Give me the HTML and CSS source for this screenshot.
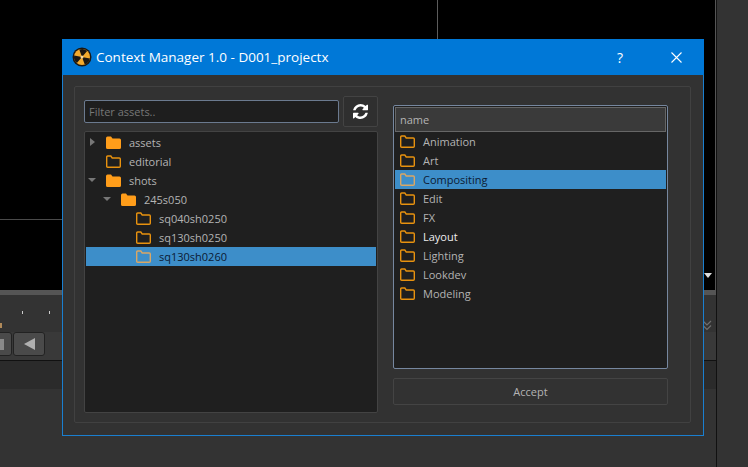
FILE: index.html
```html
<!DOCTYPE html>
<html lang="en">
<head>
  <meta charset="UTF-8">
  <meta name="viewport" content="width=device-width, initial-scale=1">
  <title>Context Manager</title>
  <link rel="stylesheet" href="styles.css">
</head>

<body>
  <svg class="defs" width="0" height="0">
    <symbol id="folder-fill" viewBox="0 0 15 13">
      <path d="M0 2.200Q0 .5 1.500 .5H5L6.500 2.500H13.500Q15 2.500 15 4V11.500Q15 13 13.500 13H1.500Q0 13 0 11.500Z" fill="#ff9d1a"/>
    </symbol>
    <symbol id="folder-line" viewBox="0 0 15 13">
      <path d="M.7 2.200Q.7 1 1.700 1H4.800L6.200 3H13.300Q14.300 3 14.300 4V11.300Q14.300 12.300 13.300 12.300H1.700Q.7 12.300 .7 11.300Z" fill="none" stroke="#e8920f" stroke-width="1.400"/>
    </symbol>
    <symbol id="folder-pale" viewBox="0 0 15 13">
      <path d="M.7 2.200Q.7 1 1.700 1H4.800L6.200 3H13.300Q14.300 3 14.300 4V11.300Q14.300 12.300 13.300 12.300H1.700Q.7 12.300 .7 11.300Z" fill="none" stroke="#d9a765" stroke-width="1.400"/>
    </symbol>
  </svg>

  <!-- app behind the dialog -->
  <div class="app">
    <div class="main">
      <div class="viewer">
        <div class="viewer-hline"></div>
        <div class="viewer-vline"></div>
        <div class="viewer-marker"></div>
      </div>
      <div class="timeline">
        <div class="timeline-strip"></div>
        <div class="ticks"><span class="tick"></span><span class="tick"></span></div>
        <div class="frame-mark"></div>
        <div class="transport">
          <div class="tbtn tbtn-stop"><span class="bar"></span></div>
          <div class="tbtn tbtn-back"><span class="arrow"></span></div>
        </div>
        <div class="chevrons">
          <svg width="10" height="11" viewBox="0 0 10 11"><path d="M1 1L5 5L9 1M1 5.500L5 9.500L9 5.500" fill="none" stroke="#6f6f6f" stroke-width="1.200"/></svg>
        </div>
      </div>
      <div class="status"></div>
    </div>
    <div class="side"></div>
  </div>

  <div class="dialog">
    <div class="titlebar">
      <svg class="nuke" width="20" height="20" viewBox="0 0 20 20">
        <circle cx="10" cy="10" r="9.500" fill="#1b1712"/>
        <circle cx="10" cy="10" r="8" fill="#f2aa2e"/>
        <g transform="rotate(10 10 10)">
          <path d="M10 10L6 3.100A8 8 0 0 1 14 3.100ZM10 10L18 10A8 8 0 0 1 14 16.900ZM10 10L6 16.900A8 8 0 0 1 2 10Z" fill="#1b1712"/>
        </g>
        <circle cx="10" cy="10" r="1.500" fill="#f7d9a0"/>
      </svg>
      <span class="title">Context Manager 1.0 - D001_projectx</span>
      <span class="help">?</span>
      <svg class="close" width="11" height="11" viewBox="0 0 11 11"><path d="M.5 .5L10.500 10.500M10.500 .5L.5 10.500" stroke="#fff" stroke-width="1.100"/></svg>
    </div>

    <div class="dialog-body">
      <div class="group">
        <div class="col-left">
          <div class="filter-row">
            <input class="filter" type="text" placeholder="Filter assets..">
            <button class="refresh">
              <svg width="15" height="15" viewBox="0 0 1536 1536"><path fill="#fff" d="M1511 928q0 5-1 7-64 268-268 434.500t-478 166.500q-146 0-282.500-55t-243.500-157l-129 129q-19 19-45 19t-45-19-19-45v-448q0-26 19-45t45-19h448q26 0 45 19t19 45-19 45l-137 137q71 66 161 102t187 36q134 0 250-65t186-179q11-17 53-117 8-23 30-23h192q13 0 22.500 9.500t9.500 22.500zm25-800v448q0 26-19 45t-45 19h-448q-26 0-45-19t-19-45 19-45l138-138q-148-137-349-137-134 0-250 65t-186 179q-11 17-53 117-8 23-30 23h-199q-13 0-22.500-9.500t-9.500-22.500v-7q65-268 270-434.500t480-166.500q146 0 284 55.500t245 156.500l130-129q19-19 45-19t45 19 19 45z"/></svg>
            </button>
          </div>
          <div class="tree">
            <div class="row depth0"><span class="tri tri-right"></span><svg class="ficon"><use href="#folder-fill"/></svg><span>assets</span></div>
            <div class="row depth0"><span class="tri"></span><svg class="ficon"><use href="#folder-line"/></svg><span>editorial</span></div>
            <div class="row depth0"><span class="tri tri-down"></span><svg class="ficon"><use href="#folder-fill"/></svg><span>shots</span></div>
            <div class="row depth1"><span class="tri tri-down"></span><svg class="ficon"><use href="#folder-fill"/></svg><span>245s050</span></div>
            <div class="row depth2"><span class="tri"></span><svg class="ficon"><use href="#folder-line"/></svg><span>sq040sh0250</span></div>
            <div class="row depth2"><span class="tri"></span><svg class="ficon"><use href="#folder-line"/></svg><span>sq130sh0250</span></div>
            <div class="row depth2 selected"><span class="tri"></span><svg class="ficon"><use href="#folder-pale"/></svg><span>sq130sh0260</span></div>
          </div>
        </div>

        <div class="col-right">
          <div class="list">
            <div class="list-head">name</div>
            <div class="item"><svg class="ficon"><use href="#folder-line"/></svg><span>Animation</span></div>
            <div class="item"><svg class="ficon"><use href="#folder-line"/></svg><span>Art</span></div>
            <div class="item selected"><svg class="ficon"><use href="#folder-pale"/></svg><span>Compositing</span></div>
            <div class="item"><svg class="ficon"><use href="#folder-line"/></svg><span>Edit</span></div>
            <div class="item"><svg class="ficon"><use href="#folder-line"/></svg><span>FX</span></div>
            <div class="item bright"><svg class="ficon"><use href="#folder-line"/></svg><span>Layout</span></div>
            <div class="item"><svg class="ficon"><use href="#folder-line"/></svg><span>Lighting</span></div>
            <div class="item"><svg class="ficon"><use href="#folder-line"/></svg><span>Lookdev</span></div>
            <div class="item"><svg class="ficon"><use href="#folder-line"/></svg><span>Modeling</span></div>
          </div>
          <button class="accept">Accept</button>
        </div>
      </div>
    </div>
  </div>
</body>
</html>
```

FILE: styles.css
```css
* {
  box-sizing: border-box;
}
html, body {
  margin: 0;
  height: 100%;
  overflow: hidden;
}
body {
  background: #333;
  font-family: "Open Sans", "Noto Sans", sans-serif;
  font-size: 11px;
  color: #b4b4b4;
}
.defs {
  position: absolute;
}

/* app behind the dialog */
.app {
  display: flex;
  height: 467px;
}
.main {
  width: 716px;
}
.side {
  width: 32px;
  background: #333;
  border-left: 1px solid #111;
}
.viewer {
  position: relative;
  height: 290px;
  background: #000;
  border-right: 1px solid #555;
}
.viewer-hline {
  position: absolute;
  left: 0;
  width: 100px;
  top: 219px;
  height: 1px;
  background: #4a4a4a;
}
.viewer-vline {
  position: absolute;
  left: 437px;
  top: 0;
  width: 1px;
  height: 219px;
  background: #5c5c5c;
}
.viewer-marker {
  position: absolute;
  left: 704px;
  top: 273px;
  border-left: 4px solid transparent;
  border-right: 4px solid transparent;
  border-top: 5px solid #ddd;
}
.timeline {
  position: relative;
  height: 71px;
  background: #333;
  border-bottom: 1px solid #111;
}
.timeline-strip {
  height: 5px;
  background: #555;
}
.ticks {
  display: flex;
  gap: 26px;
  padding: 16px 0 0 22px;
}
.tick {
  width: 1px;
  height: 3px;
  background: #ccc;
}
.frame-mark {
  position: absolute;
  left: 0;
  top: 33px;
  width: 2px;
  height: 5px;
  background: #b08a5a;
}
.transport {
  display: flex;
  align-items: center;
  gap: 1px;
  height: 28px;
  margin-top: 18px;
  padding-bottom: 4px;
  background: #393939;
}
.tbtn {
  display: flex;
  align-items: center;
  justify-content: center;
  height: 24px;
  background: #4a4a4a;
  border: 1px solid #222;
  border-radius: 3px;
}
.tbtn-stop {
  width: 31px;
  margin-left: -19px;
}
.tbtn-back {
  width: 32px;
}
.bar {
  width: 4px;
  height: 11px;
  margin-left: 10px;
  background: #8a8a8a;
}
.arrow {
  border-top: 6px solid transparent;
  border-bottom: 6px solid transparent;
  border-right: 11px solid #b0b0b0;
}
.chevrons {
  position: absolute;
  right: 4px;
  top: 29px;
}
.status {
  height: 28px;
  background: #2b2b2b;
}

/* dialog */
.dialog {
  position: absolute;
  left: 62px;
  top: 39px;
  width: 642px;
  height: 397px;
  display: flex;
  flex-direction: column;
  background: #323232;
  border: 1px solid #1a7fd0;
  border-top: 0;
}
.titlebar {
  display: flex;
  align-items: center;
  flex: none;
  height: 36px;
  margin: 0 -1px;
  padding: 0 22px 0 10px;
  background: #0078d7;
  color: #fff;
}
.nuke {
  flex: none;
}
.title {
  margin-left: 4px;
  font-size: 13.500px;
  flex: 1;
}
.help {
  font-size: 14px;
  margin-right: 48px;
}
.dialog-body {
  flex: 1;
  padding: 11px 12px 12px 11px;
  min-height: 0;
}
.group {
  display: grid;
  grid-template-columns: 294px 275px;
  column-gap: 15px;
  height: 100%;
  padding: 9px 0 9px 9px;
  border: 1px solid #414141;
  border-radius: 2px;
}
.col-left, .col-right {
  display: flex;
  flex-direction: column;
  min-height: 0;
}
.filter-row {
  display: flex;
  align-items: center;
  justify-content: space-between;
  flex: none;
  height: 31px;
  margin-bottom: 4px;
}
.filter {
  width: 255px;
  height: 23px;
  padding: 0 4px;
  background: #1e1e1e;
  border: 1px solid #6b7a8f;
  border-radius: 2px;
  color: #b4b4b4;
  font: inherit;
  outline: none;
}
.filter::placeholder {
  color: #777;
}
.refresh {
  display: flex;
  align-items: center;
  justify-content: center;
  width: 35px;
  height: 31px;
  padding: 0;
  background: #2f2f2f;
  border: 1px solid #434343;
  border-radius: 2px;
}
.tree {
  flex: 1;
  padding: 1px;
  background: #1f1f1f;
  border: 1px solid #434343;
  border-radius: 2px;
}
.row, .item {
  display: flex;
  align-items: center;
  height: 19px;
}
.depth1 {
  padding-left: 15px;
}
.depth2 {
  padding-left: 30px;
}
.row .tri {
  flex: none;
  width: 20px;
  height: 19px;
  position: relative;
}
.tri-right::after, .tri-down::after {
  content: "";
  position: absolute;
}
.tri-right::after {
  left: 4px;
  top: 5px;
  border-top: 4px solid transparent;
  border-bottom: 4px solid transparent;
  border-left: 5px solid #777;
}
.tri-down::after {
  left: 2px;
  top: 7px;
  border-left: 4px solid transparent;
  border-right: 4px solid transparent;
  border-top: 4px solid #777;
}
.ficon {
  flex: none;
  width: 15px;
  height: 13px;
  margin-right: 8px;
  margin-top: -1px;
}
.selected {
  background: #3d8ec9;
  color: #0c1a33;
}
.col-right {
  padding-top: 9px;
}
.list {
  flex: 1;
  padding: 1px;
  background: #1f1f1f;
  border: 1px solid #76879f;
  border-radius: 2px;
}
.list-head {
  height: 25px;
  line-height: 24px;
  padding-left: 4px;
  background: #3a3a3a;
  border: 1px solid #666;
}
.item {
  padding-left: 5px;
}
.bright {
  color: #eee;
}
.accept {
  flex: none;
  height: 27px;
  margin: 9px 0 8px;
  background: #323232;
  border: 1px solid #444;
  border-radius: 2px;
  color: #b4b4b4;
  font: inherit;
}
```
